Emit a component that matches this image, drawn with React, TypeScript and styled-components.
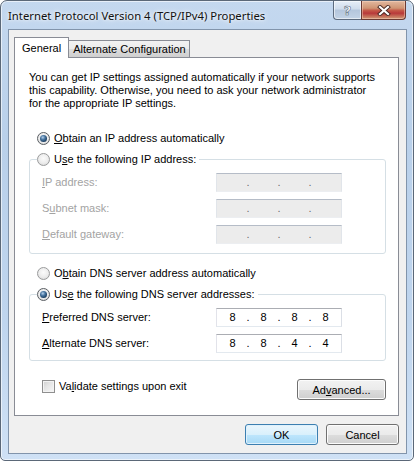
import React from "react";
import styled, { createGlobalStyle, css } from "styled-components";

const GlobalStyle = createGlobalStyle`
    html, body {
        margin: 0;
        padding: 0;
        background: #ffffff;
    }
    body {
        font-family: "Liberation Sans", Arial, sans-serif;
        font-size: 11px;
        color: #000000;
    }
`;

const Window = styled.div`
    width: 414px;
    height: 461px;
    box-sizing: border-box;
    border: 1px solid #5b6878;
    border-radius: 7px 7px 5px 5px;
    background: linear-gradient(180deg, #c4d8ef 0%, #b9d0ea 30%, #bfd5ee 70%, #cfe1f5 100%);
    box-shadow: inset 0 0 0 1px rgba(255, 255, 255, 0.6);
    display: flex;
    flex-direction: column;
    padding: 0 6px 6px 7px;
    overflow: hidden;
`;

const TitleBar = styled.div`
    height: 28px;
    display: flex;
    align-items: flex-start;
    flex-shrink: 0;
`;

const Title = styled.div`
    font-family: "Noto Sans", "Liberation Sans", sans-serif;
    font-size: 11.3px;
    line-height: 28px;
    margin-top: 1px;
    color: #111111;
    text-shadow: 0 0 6px rgba(255, 255, 255, 0.95), 0 0 3px rgba(255, 255, 255, 0.9);
    white-space: nowrap;
`;

const Controls = styled.div`
    margin-left: auto;
    display: flex;
    margin-right: 1px;
`;

const CaptionButton = styled.div<{ $kind: "help" | "close" }>`
    height: 19px;
    box-sizing: border-box;
    display: flex;
    align-items: center;
    justify-content: center;
    border: 1px solid #5d6b7e;
    border-top: none;
    ${(p) => p.$kind === "help"
        ? css`
            width: 28px;
            border-right: none;
            border-radius: 0 0 0 4px;
            background: linear-gradient(180deg, #e6eef8 0%, #cfdcec 45%, #b4c6dc 50%, #c3d3e6 100%);
            box-shadow: inset 0 0 0 1px rgba(255, 255, 255, 0.55);
        `
        : css`
            width: 45px;
            border-color: #6b3a33;
            border-radius: 0 0 4px 0;
            background: linear-gradient(180deg, #e2b89f 0%, #cf9473 40%, #c55a48 52%, #b8393a 68%, #c56e58 85%, #cf9a78 100%);
            box-shadow: inset 0 0 0 1px rgba(255, 220, 200, 0.45);
        `}
`;

const HelpGlyph = styled.span`
    font-family: "DejaVu Sans", sans-serif;
    font-weight: bold;
    font-size: 13px;
    line-height: 1;
    color: #ffffff;
    -webkit-text-stroke: 0.6px #5f6f82;
    margin-top: 1px;
`;

const Client = styled.div`
    flex: 1;
    box-sizing: border-box;
    border: 1px solid #8194ab;
    background: #f0f0f0;
    padding: 7px 7px 0 5px;
    display: flex;
    flex-direction: column;
`;

const TabStrip = styled.div`
    display: flex;
    align-items: flex-end;
    height: 21px;
    margin-bottom: -1px;
    position: relative;
    z-index: 1;
`;

const Tab = styled.div<{ $active?: boolean }>`
    box-sizing: border-box;
    border: 1px solid #898c95;
    padding: 0 3px 0 4px;
    white-space: nowrap;
    display: flex;
    align-items: center;
    ${(p) => p.$active
        ? css`
            height: 21px;
            padding: 0 7px;
            border-bottom: none;
            background: #ffffff;
        `
        : css`
            height: 18px;
            border-left: none;
            background: linear-gradient(180deg, #f2f2f2 0%, #ebebeb 50%, #dddddd 51%, #cfcfcf 100%);
        `}
`;

const Panel = styled.div`
    height: 359px;
    box-sizing: border-box;
    border: 1px solid #898c95;
    background: #ffffff;
    padding: 13px 12px 0 14px;
    display: flex;
    flex-direction: column;
`;

const Intro = styled.p`
    margin: 0;
    line-height: 13px;
    white-space: nowrap;
`;

const OptionRow = styled.div<{ $top: number }>`
    display: flex;
    align-items: center;
    gap: 4px;
    height: 13px;
    margin-top: ${(p) => p.$top}px;
    padding-left: 8px;
    line-height: 13px;
    white-space: nowrap;
`;

const Radio = styled.span<{ $checked?: boolean }>`
    width: 13px;
    height: 13px;
    box-sizing: border-box;
    border-radius: 50%;
    border: 1px solid #9a9b9c;
    background: radial-gradient(circle at 50% 40%, #fbfbfb 0%, #ececec 55%, #cfcfcf 100%);
    position: relative;
    flex-shrink: 0;
    ${(p) => p.$checked && css`
        border-color: #5a5e63;
        &::after {
            content: "";
            position: absolute;
            left: 2px;
            top: 2px;
            width: 7px;
            height: 7px;
            border-radius: 50%;
            background: radial-gradient(circle at 40% 35%, #b6d0ea 0%, #4a77a2 35%, #183a5c 75%, #0c2136 100%);
        }
    `}
`;

const Group = styled.div<{ $bottom: number }>`
    margin-top: 14px;
    border: 1px solid #d5dfe5;
    border-radius: 3px;
    padding: 0 0 ${(p) => p.$bottom}px 12px;
`;

const GroupHeader = styled(OptionRow)`
    margin: -7px 0 0 -5px;
    padding: 0 3px 0 0;
    background: #ffffff;
    width: fit-content;
`;

const FieldGrid = styled.div`
    display: grid;
    grid-template-columns: 174px 126px;
    grid-auto-rows: 19px;
    row-gap: 7px;
    margin-top: 7px;
    align-items: center;
`;

const FieldLabel = styled.label<{ $disabled?: boolean }>`
    color: ${(p) => (p.$disabled ? "#a3a3a3" : "#000000")};
    white-space: nowrap;
    line-height: 13px;
`;

const Key = styled.span`
    text-decoration: underline;
    text-underline-offset: 1px;
`;

const IpBox = styled.div<{ $disabled?: boolean }>`
    height: 19px;
    box-sizing: border-box;
    border: 1px solid;
    border-color: #abadb3 #dbdfe6 #e3e9ef #e2e3ea;
    background: #ffffff;
    display: flex;
    align-items: center;
    padding: 0 2px;
    ${(p) => p.$disabled && css`
        border-color: #b5bcc7 #e1e5ea #eceef1 #e1e5ea;
        background: #ececec;
        color: #6d6d6d;
    `}
`;

const Octet = styled.span`
    flex: 1;
    text-align: center;
    line-height: 17px;
`;

const Dot = styled.span`
    width: 4px;
    text-align: center;
    line-height: 17px;
`;

const BottomRow = styled.div`
    display: flex;
    align-items: flex-start;
    margin-top: 18px;
    padding-left: 13px;
`;

const CheckLabel = styled.div`
    display: flex;
    align-items: center;
    margin-top: 1px;
    line-height: 13px;
    white-space: nowrap;
`;

const CheckBox = styled.span`
    width: 13px;
    height: 13px;
    box-sizing: border-box;
    border: 1px solid #8f8f8f;
    background: linear-gradient(135deg, #cfcfcf 0%, #e6e6e6 45%, #f7f7f7 100%);
    box-shadow: inset 0 0 0 1px #f3f3f3;
    margin-right: 4px;
    flex-shrink: 0;
`;

const Button = styled.button<{ $primary?: boolean; $width: number }>`
    width: ${(p) => p.$width}px;
    height: 21px;
    box-sizing: border-box;
    font-family: "Liberation Sans", Arial, sans-serif;
    font-size: 11px;
    color: #000000;
    padding: 0;
    border-radius: 3px;
    border: 1px solid #707070;
    background: linear-gradient(180deg, #f2f2f2 0%, #ebebeb 50%, #dddddd 51%, #cfcfcf 100%);
    box-shadow: inset 0 0 0 1px #fcfcfc;
    ${(p) => p.$primary && css`
        border-color: #3c7fb1;
        background: linear-gradient(180deg, #eaf6fd 0%, #d9f0fc 50%, #bee6fd 51%, #a7d9f5 100%);
        box-shadow: inset 0 0 0 1px #dff1fc;
    `}
`;

const AdvancedButton = styled(Button)`
    margin-left: auto;
`;

const Footer = styled.div`
    display: flex;
    justify-content: flex-end;
    gap: 8px;
    margin-top: 8px;
`;

const CloseIcon = () => (
    <svg width="14" height="11" viewBox="0 0 14 11">
        <path d="M3 2 L11 9 M11 2 L3 9" stroke="#4a2a24" strokeWidth="4" strokeLinecap="square" />
        <path d="M3 2 L11 9 M11 2 L3 9" stroke="#ffffff" strokeWidth="2.2" strokeLinecap="square" />
    </svg>
);

const IpField = ({ octets, disabled }: { octets: string[]; disabled?: boolean }) => (
    <IpBox $disabled={disabled}>
        <Octet>{octets[0]}</Octet>
        <Dot>.</Dot>
        <Octet>{octets[1]}</Octet>
        <Dot>.</Dot>
        <Octet>{octets[2]}</Octet>
        <Dot>.</Dot>
        <Octet>{octets[3]}</Octet>
    </IpBox>
);

const empty = ["", "", "", ""];

const App = () => {
    return (
        <>
            <GlobalStyle />
            <Window>
                <TitleBar>
                    <Title>Internet Protocol Version 4 (TCP/IPv4) Properties</Title>
                    <Controls>
                        <CaptionButton $kind="help"><HelpGlyph>?</HelpGlyph></CaptionButton>
                        <CaptionButton $kind="close"><CloseIcon /></CaptionButton>
                    </Controls>
                </TitleBar>
                <Client>
                    <TabStrip>
                        <Tab $active>General</Tab>
                        <Tab>Alternate Configuration</Tab>
                    </TabStrip>
                    <Panel>
                        <Intro>
                            You can get IP settings assigned automatically if your network supports<br />
                            this capability. Otherwise, you need to ask your network administrator<br />
                            for the appropriate IP settings.
                        </Intro>

                        <OptionRow $top={22}>
                            <Radio $checked />
                            <span><Key>O</Key>btain an IP address automatically</span>
                        </OptionRow>

                        <Group $bottom={9}>
                            <GroupHeader $top={0}>
                                <Radio />
                                <span>U<Key>s</Key>e the following IP address:</span>
                            </GroupHeader>
                            <FieldGrid>
                                <FieldLabel $disabled><Key>I</Key>P address:</FieldLabel>
                                <IpField octets={empty} disabled />
                                <FieldLabel $disabled>S<Key>u</Key>bnet mask:</FieldLabel>
                                <IpField octets={empty} disabled />
                                <FieldLabel $disabled><Key>D</Key>efault gateway:</FieldLabel>
                                <IpField octets={empty} disabled />
                            </FieldGrid>
                        </Group>

                        <OptionRow $top={13}>
                            <Radio />
                            <span>O<Key>b</Key>tain DNS server address automatically</span>
                        </OptionRow>

                        <Group $bottom={7}>
                            <GroupHeader $top={0}>
                                <Radio $checked />
                                <span>Us<Key>e</Key> the following DNS server addresses:</span>
                            </GroupHeader>
                            <FieldGrid>
                                <FieldLabel><Key>P</Key>referred DNS server:</FieldLabel>
                                <IpField octets={["8", "8", "8", "8"]} />
                                <FieldLabel><Key>A</Key>lternate DNS server:</FieldLabel>
                                <IpField octets={["8", "8", "4", "4"]} />
                            </FieldGrid>
                        </Group>

                        <BottomRow>
                            <CheckLabel>
                                <CheckBox />
                                <span>Va<Key>l</Key>idate settings upon exit</span>
                            </CheckLabel>
                            <AdvancedButton $width={89}>Ad<Key>v</Key>anced...</AdvancedButton>
                        </BottomRow>
                    </Panel>
                    <Footer>
                        <Button $primary $width={73}>OK</Button>
                        <Button $width={73}>Cancel</Button>
                    </Footer>
                </Client>
            </Window>
        </>
    );
};

export default App;
